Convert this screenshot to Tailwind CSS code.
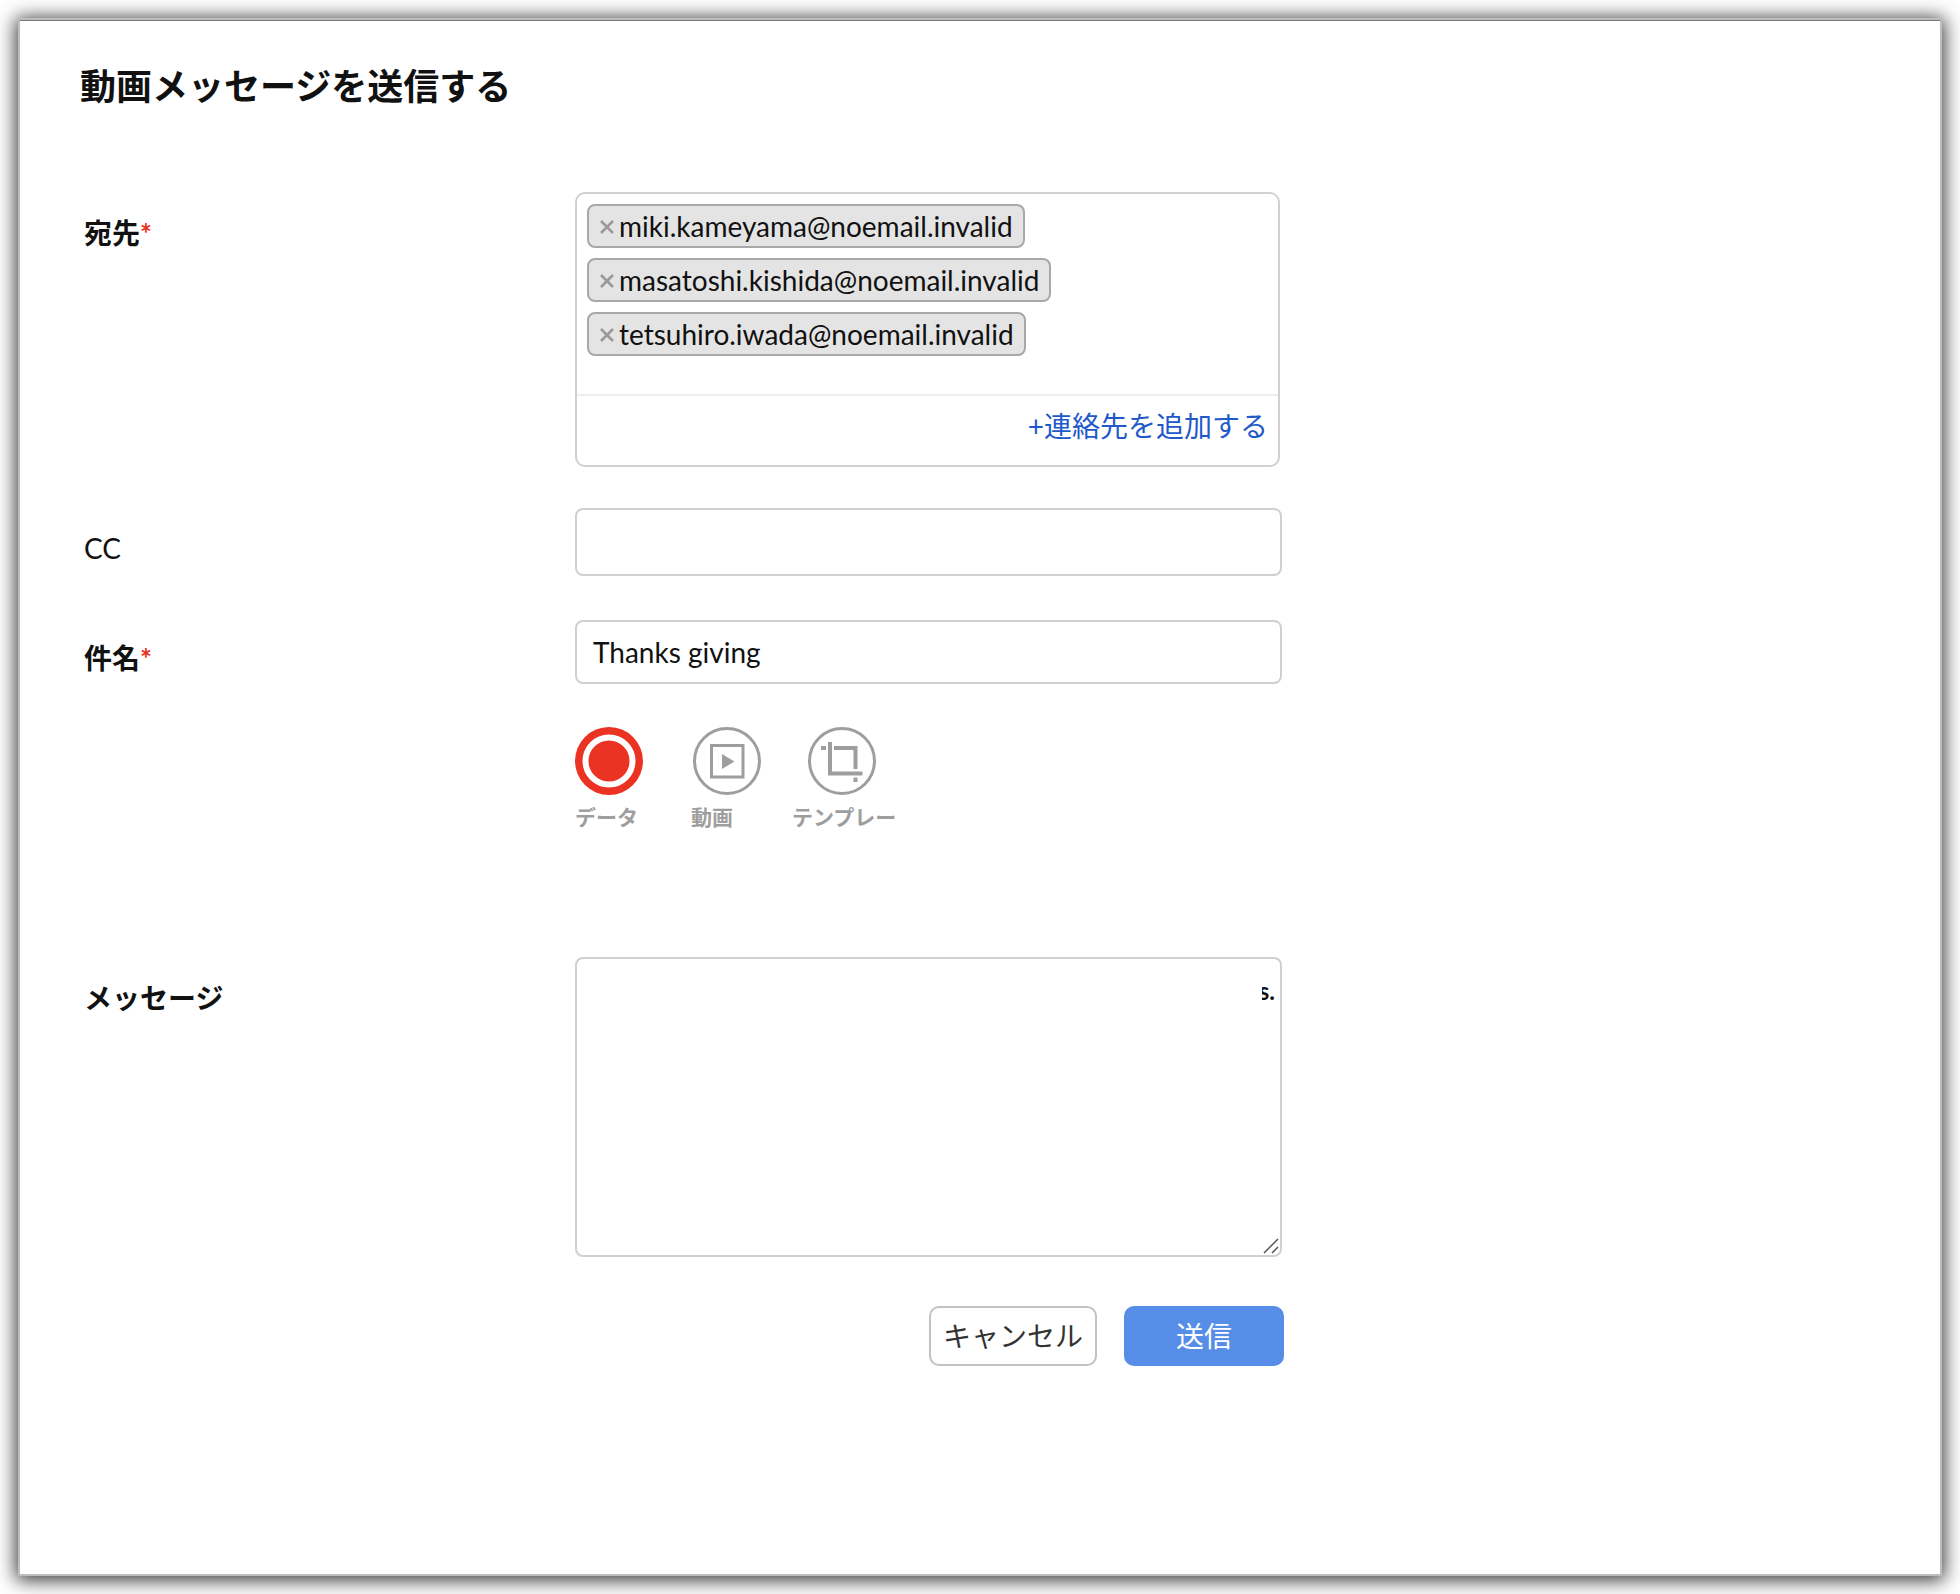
<!DOCTYPE html>
<html lang="ja">
<head>
<meta charset="utf-8">
<meta name="viewport" content="width=device-width, initial-scale=1">
<title>動画メッセージを送信する</title>
<script src="https://cdn.jsdelivr.net/npm/@tailwindcss/browser@4"></script>
</head>
<body class="flex min-h-screen bg-white p-[18px] font-[Lato,'Noto_Sans_CJK_JP',sans-serif] text-[28px] leading-10 text-[#111]">
<main class="flex-1 border-2 border-[#bdbdbd] bg-white px-[60px] pt-[46px] pb-16 shadow-[0_2px_18px_2px_rgba(0,0,0,0.8),inset_0_1px_0_#777]">
  <h1 class="text-4xl leading-10 font-bold">動画メッセージを送信する</h1>

  <form class="mt-[86px] grid grid-cols-[491px_minmax(0,707px)] items-start pl-1" onsubmit="return false">
    <label for="to" class="pt-[21px] font-bold">宛先<span class="text-[#ea3323]">*</span></label>
    <div class="mr-[2px] rounded-[10px] border-2 border-[#d0d0d0]">
      <div class="flex h-[200px] flex-col items-start gap-[10px] p-[10px]">
        <span class="flex h-11 items-center gap-1 rounded-lg border-2 border-[#a8a8a8] bg-[#e4e4e4] px-[10px]">
          <button type="button" aria-label="削除"><svg class="size-4" viewBox="0 0 16 16" fill="none" stroke="#999" stroke-width="2.5"><path d="M2 3l12 12M14 3L2 15"/></svg></button>miki.kameyama@noemail.invalid</span>
        <span class="flex h-11 items-center gap-1 rounded-lg border-2 border-[#a8a8a8] bg-[#e4e4e4] px-[10px]">
          <button type="button" aria-label="削除"><svg class="size-4" viewBox="0 0 16 16" fill="none" stroke="#999" stroke-width="2.5"><path d="M2 3l12 12M14 3L2 15"/></svg></button>masatoshi.kishida@noemail.invalid</span>
        <span class="flex h-11 items-center gap-1 rounded-lg border-2 border-[#a8a8a8] bg-[#e4e4e4] px-[10px]">
          <button type="button" aria-label="削除"><svg class="size-4" viewBox="0 0 16 16" fill="none" stroke="#999" stroke-width="2.5"><path d="M2 3l12 12M14 3L2 15"/></svg></button>tetsuhiro.iwada@noemail.invalid</span>
        <input id="to" type="text" class="h-4 w-full min-w-0 outline-none">
      </div>
      <div class="flex h-[71px] justify-end border-t-2 border-[#ededed] px-[10px] pt-[10px]">
        <a href="#" class="text-[#2159c9]">+連絡先を追加する</a>
      </div>
    </div>

    <label for="cc" class="mt-[41px] pt-5">CC</label>
    <input id="cc" type="text" class="mt-[41px] h-[68px] w-full rounded-lg border-2 border-[#d0d0d0] px-4 outline-none">

    <label for="subject" class="mt-11 pt-[18px] font-bold">件名<span class="text-[#ea3323]">*</span></label>
    <input id="subject" type="text" value="Thanks giving" class="mt-11 h-16 w-full rounded-lg border-2 border-[#d0d0d0] px-4 outline-none">

    <div class="col-start-2 mt-[43px] flex h-[104px] text-[21px] leading-8 font-bold text-[#9e9e9e]">
      <button type="button" class="flex w-[116px] flex-col items-start gap-[6px]">
        <svg class="size-[68px] shrink-0" viewBox="0 0 68 68"><circle cx="34" cy="34" r="34" fill="#ea3323"/><circle cx="34" cy="34" r="23.5" fill="#ea3323" stroke="#fff" stroke-width="6"/></svg>
        データ
      </button>
      <button type="button" class="flex w-[101px] flex-col items-start gap-[6px]">
        <svg class="ml-[2px] size-[68px] shrink-0" viewBox="0 0 68 68" fill="none" stroke="#9e9e9e" stroke-width="3"><circle cx="34" cy="34" r="32.5"/><path d="M18.500 18.500h31.500v31.500h-31.500z"/><path d="M29 27v15l12.500-7.500z" fill="#9e9e9e" stroke="none"/></svg>
        動画
      </button>
      <button type="button" class="flex flex-col items-start gap-[6px]">
        <svg class="ml-4 size-[68px] shrink-0" viewBox="0 0 68 68" fill="none" stroke="#9e9e9e" stroke-width="3"><circle cx="34" cy="34" r="32.500"/><path d="M22 15v31.500h32.500M26 21h21.500v21M13 21h5M47.500 50.500v4.500" stroke-width="4"/></svg>
        テンプレー
      </button>
    </div>

    <label for="message" class="mt-[126px] pt-[21px] font-bold">メッセージ</label>
    <div class="relative mt-[126px] flex">
      <textarea id="message" class="h-[300px] w-full resize-none rounded-lg border-2 border-[#d0d0d0] px-[5px] py-3 text-right text-2xl leading-10 font-bold outline-none">s.</textarea>
      <span class="absolute top-4 right-[20px] h-8 w-8 bg-white"></span>
      <svg class="absolute right-[3px] bottom-[3px] size-4" viewBox="0 0 16 16" fill="none" stroke="#555" stroke-width="1.500"><path d="M1 15L15 1M9 15l6-6"/></svg>
    </div>

    <div class="col-start-2 mt-[49px] -mr-[2px] flex justify-end gap-[27px]">
      <button type="button" class="h-[60px] w-[168px] rounded-[10px] border-2 border-[#c2c2c2] text-[#333]">キャンセル</button>
      <button type="submit" class="h-[60px] w-40 rounded-[10px] bg-[#568de6] text-white">送信</button>
    </div>
  </form>
</main>
</body>
</html>
